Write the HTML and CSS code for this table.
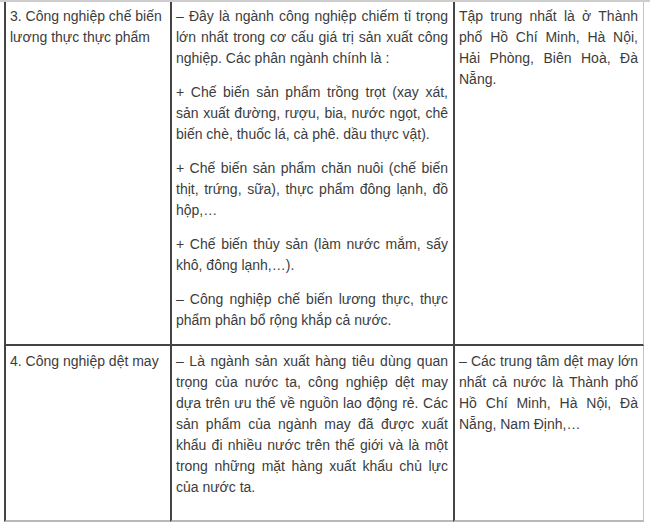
FILE: index.html
```html
<!DOCTYPE html>
<html lang="vi">
<head>
<meta charset="utf-8">
<title>Công nghiệp</title>
<link rel="stylesheet" href="styles.css">
</head>
<body>
<div class="sheet">
  <div class="grid">
    <div class="cell c1 r1"><p>3. Công nghiệp chế biến lương thực thực phẩm</p></div>
    <div class="cell c2 r1">
      <p>– Đây là ngành công nghiệp chiếm tỉ trọng lớn nhất trong cơ cấu giá trị sản xuất công nghiệp. Các phân ngành chính là :</p>
      <p>+ Chế biến sản phẩm trồng trọt (xay xát, sản xuất đường, rượu, bia, nước ngọt, chê biến chè, thuốc lá, cà phê. dầu thực vật).</p>
      <p>+ Chế biến sản phẩm chăn nuôi (chế biến thịt, trứng, sữa), thực phẩm đông lạnh, đồ hộp,…</p>
      <p>+ Chế biến thủy sản (làm nước mắm, sấy khô, đông lạnh,…).</p>
      <p>– Công nghiệp chế biến lương thực, thực phẩm phân bổ rộng khắp cả nước.</p>
    </div>
    <div class="cell c3 r1"><p>Tập trung nhất là ở Thành phố Hồ Chí Minh, Hà Nội, Hải Phòng, Biên Hoà, Đà Nẵng.</p></div>

    <div class="cell c1 r2"><p>4. Công nghiệp dệt may</p></div>
    <div class="cell c2 r2"><p>– Là ngành sản xuất hàng tiêu dùng quan trọng của nước ta, công nghiệp dệt may dựa trên ưu thế về nguồn lao động rẻ. Các sản phẩm của ngành may đã được xuất khẩu đi nhiều nước trên thế giới và là một trong những mặt hàng xuất khẩu chủ lực của nước ta.</p></div>
    <div class="cell c3 r2"><p>– Các trung tâm dệt may lớn nhất cả nước là Thành phố Hồ Chí Minh, Hà Nội, Đà Nẵng, Nam Định,…</p></div>
  </div>
</div>
</body>
</html>
```

FILE: styles.css
```css
html, body {
  margin: 0;
  padding: 0;
  background: #ffffff;
}

.sheet {
  border-top: 2px solid #cdcdcd;
  width: 650px;
}

.grid {
  display: grid;
  grid-template-columns: 166px 283px 191px;
  margin-left: 4px;
  width: 640px;
  font-family: "Liberation Sans", Arial, sans-serif;
  font-size: 14px;
  line-height: 21px;
  color: #3c3c3c;
}

.cell {
  box-sizing: border-box;
  border-left: 2px solid #444444;
  padding: 4px 5px 0 4px;
  text-align: justify;
}

.cell p {
  margin: 0 0 13px 0;
}

.r1 {
  border-bottom: 2px solid #444444;
}

.r2 {
  padding-top: 5px;
  border-bottom: 2px solid #b8b8b8;
  padding-bottom: 9px;
}

.c1 {
  text-align: left;
}

.c3 {
  border-right: 1px solid #c4c4c4;
}
```
